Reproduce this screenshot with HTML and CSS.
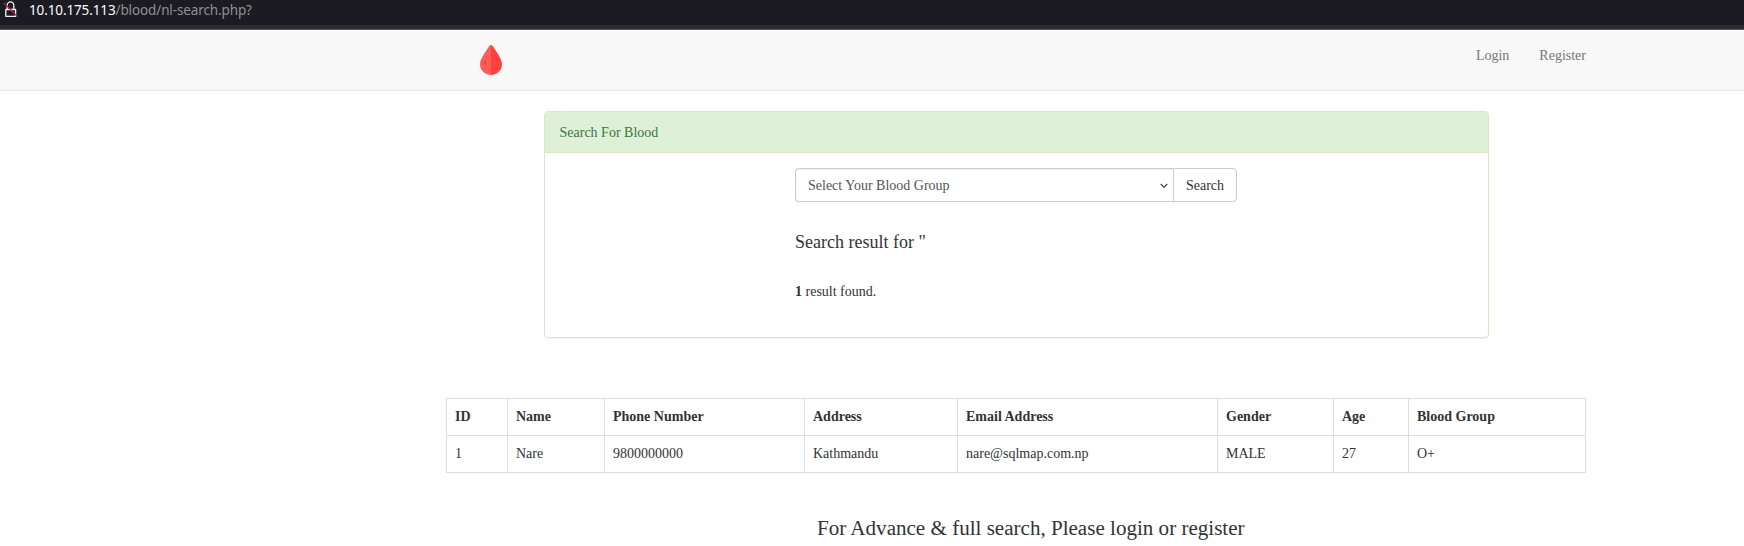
FILE: index.html
```html
<!DOCTYPE html>
<html lang="en">
<head>
<meta charset="utf-8">
<title>Search For Blood</title>
<link rel="stylesheet" href="styles.css">
</head>
<body>
<div class="urlbar">
  <svg class="lock" viewBox="0 0 16 20" fill="none">
    <path d="M4.200 9.300V5.200a3.300 3.300 0 0 1 6.600 0v4.100M2.800 9.500h9.800v6.800H2.800z" stroke="#f0f0f4" stroke-width="1.300" stroke-linejoin="round"/>
    <path d="M1 3l13.500 13.600" stroke="#c01a49" stroke-width="1.300"/>
  </svg>
  <span class="url"><span class="host">10.10.175.113</span>/blood/nl-search.php?</span>
</div>
<nav class="navbar">
  <div class="navbar-inner">
    <a class="brand"><svg class="drop" viewBox="0 0 22 30">
      <path d="M11 0C9.800 0 9 1.300 8 3 4 9.200 0 14.500 0 19.200A11 10.800 0 0 0 11 30z" fill="#ff5a57"/>
      <path d="M11 0c1.200 0 2 1.300 3 3 4 6.200 8 11.500 8 16.200A11 10.800 0 0 1 11 30z" fill="#ff413d"/>
      <path d="M6 15.200c-2 1.300-2.500 3.500-.8 4.800.900-.7 1.200-2.700.8-4.800z" fill="#ee3937"/>
    </svg></a>
    <div class="links"><a>Login</a><a>Register</a></div>
  </div>
</nav>
<main class="container">
  <section class="panel">
    <div class="panel-heading">Search For Blood</div>
    <div class="panel-body">
      <form class="search-form">
        <div class="select"><span>Select Your Blood Group</span>
          <svg class="chevron" viewBox="0 0 8 6" fill="none"><path d="M.8 1L4 4.400 7.200 1" stroke="#444" stroke-width="1.200"/></svg>
        </div>
        <button class="search-btn" type="button">Search</button>
      </form>
      <h4 class="result-title">Search result for "</h4>
      <p class="result-count"><b>1</b> result found.</p>
    </div>
  </section>
  <table class="results">
    <colgroup><col class="c-id"><col class="c-name"><col class="c-phone"><col class="c-address"><col class="c-email"><col class="c-gender"><col class="c-age"><col class="c-group"></colgroup>
    <tr><th>ID</th><th>Name</th><th>Phone Number</th><th>Address</th><th>Email Address</th><th>Gender</th><th>Age</th><th>Blood Group</th></tr>
    <tr><td>1</td><td>Nare</td><td>9800000000</td><td>Kathmandu</td><td>nare@sqlmap.com.np</td><td>MALE</td><td>27</td><td>O+</td></tr>
  </table>
  <p class="notice">For Advance &amp; full search, Please login or register</p>
</main>
</body>
</html>
```
FILE: styles.css
```css
* { box-sizing: border-box; }
body {
  margin: 0;
  height: 546px;
  overflow: hidden;
  background: #fff;
  color: #333;
  font: 14px/20px "Liberation Serif", serif;
}
.urlbar {
  height: 30px;
  display: flex;
  align-items: flex-start;
  background: #1c1b22;
  border-bottom: 1px solid #5a5863;
  box-shadow: inset 0 -4px #2b2a33;
}
.lock { width: 16px; height: 20px; margin-left: 3px; }
.url {
  margin-left: 10px;
  font: 13.5px/20px "Noto Sans", sans-serif;
  letter-spacing: -.12px;
  color: #8f8f94;
}
.host { color: #fbfbfe; }
.navbar {
  height: 61px;
  background: #f8f8f8;
  border-bottom: 1px solid #e7e7e7;
}
.navbar-inner {
  width: 1140px;
  margin-left: 446px;
  display: flex;
  justify-content: space-between;
  align-items: flex-start;
}
.brand { padding: 15px 0 0 34px; }
.drop { display: block; width: 22px; height: 30px; }
.links { display: flex; gap: 30px; padding-top: 16px; color: #777; }
.container { width: 1140px; margin-left: 446px; padding-top: 20px; }
.panel {
  width: 945px;
  height: 227px;
  margin-left: 98px;
  border: 1px solid #d6e9c6;
  border-radius: 4px;
  box-shadow: 0 1px 1px rgba(0, 0, 0, .05);
}
.panel-heading {
  padding: 11px 15px 9px 14.5px;
  background: #dff0d8;
  border-bottom: 1px solid #d6e9c6;
  border-radius: 3px 3px 0 0;
  color: #3c763d;
}
.panel-body { padding: 15px 0 0 250px; }
.search-form { display: flex; width: 442px; height: 34px; }
.select {
  flex: 1;
  display: flex;
  justify-content: space-between;
  align-items: center;
  padding: 2px 5px 0 12px;
  border: 1px solid #ccc;
  border-right: 0;
  border-radius: 4px 0 0 4px;
  box-shadow: inset 0 1px 1px rgba(0, 0, 0, .075);
  color: #555;
}
.chevron { width: 8px; height: 6px; }
.search-btn {
  width: 64px;
  padding: 2px 0 0;
  background: #fff;
  border: 1px solid #ccc;
  border-radius: 0 4px 4px 0;
  font: inherit;
  color: #333;
}
.result-title { margin: 30px 0 0; font-size: 18px; line-height: 20px; font-weight: 400; }
.result-count { margin: 30px 0 0; }
.results {
  width: 1140px;
  margin-top: 60px;
  table-layout: fixed;
  border-collapse: collapse;
}
.results th, .results td { padding: 8px; border: 1px solid #ddd; text-align: left; }
.c-id { width: 61px; }
.c-name { width: 97px; }
.c-phone { width: 200px; }
.c-address { width: 153px; }
.c-email { width: 260px; }
.c-gender { width: 116px; }
.c-age { width: 75px; }
.c-group { width: 177px; }
.notice { margin: 43px 0 0 371px; font-size: 21.07px; line-height: 24px; }
```
